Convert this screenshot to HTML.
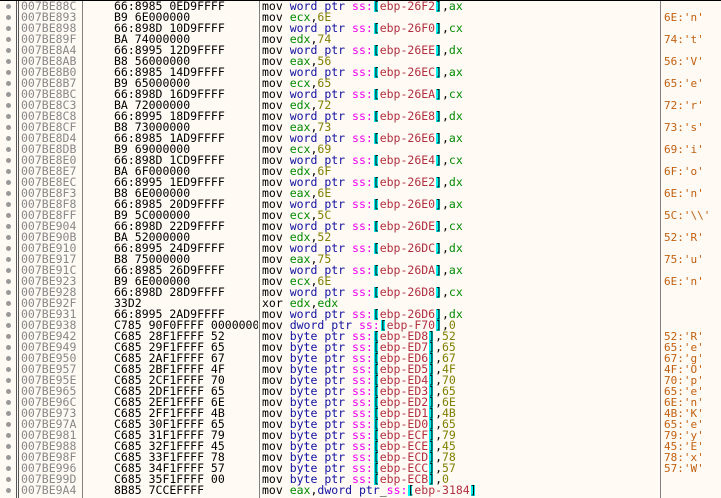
<!DOCTYPE html>
<html><head><meta charset="utf-8"><style>
html,body{margin:0;padding:0;}
body{width:721px;height:497px;background:#fffaf4;position:relative;overflow:hidden;font-family:"DejaVu Sans Mono","Liberation Mono",monospace;font-size:11.5px;}
#top{position:absolute;left:0;top:0;width:721px;height:1px;background:#000;}
.v{position:absolute;top:1px;height:497px;width:1px;background:#808080;}
.r{position:absolute;left:0;height:11px;width:721px;line-height:11px;white-space:pre;}
dt{position:absolute;left:6px;top:3px;width:5px;height:5px;border-radius:50%;background:#999;}
ad{position:absolute;left:21px;top:0;color:#888;}
by{position:absolute;left:114px;top:0;width:144px;overflow:hidden;color:#000;}
ds{position:absolute;left:262px;top:0;color:#000;}
cm{position:absolute;left:664px;top:0;color:#c06010;font-size:11px;}
sz{color:#1010a0;}
sg{color:#f000f0;}
k{display:inline-block;width:6.9px;background:linear-gradient(90deg,transparent 1px,#00f0f0 1px,#00f0f0 5px,transparent 5px);}
e{color:#b03040;}
rg{color:#008a00;}
n{color:#808000;}
</style></head><body>
<div id="top"></div>
<div class="v" style="left:16px;background:#555"></div>
<div class="v" style="left:18px;background:#555"></div>
<div class="v" style="left:82px"></div>
<div class="v" style="left:259px"></div>
<div class="v" style="left:660px"></div>

<div class="r" style="top:1px"><dt></dt><ad>007BE88C</ad><by>66:8985 0ED9FFFF</by><ds>mov <sz>word ptr</sz> <sg>ss:</sg><k>[</k><e>ebp-26F2</e><k>]</k>,<rg>ax</rg></ds></div>
<div class="r" style="top:12px"><dt></dt><ad>007BE893</ad><by>B9 6E000000</by><ds>mov <rg>ecx</rg>,<n>6E</n></ds><cm>6E:'n'</cm></div>
<div class="r" style="top:23px"><dt></dt><ad>007BE898</ad><by>66:898D 10D9FFFF</by><ds>mov <sz>word ptr</sz> <sg>ss:</sg><k>[</k><e>ebp-26F0</e><k>]</k>,<rg>cx</rg></ds></div>
<div class="r" style="top:34px"><dt></dt><ad>007BE89F</ad><by>BA 74000000</by><ds>mov <rg>edx</rg>,<n>74</n></ds><cm>74:'t'</cm></div>
<div class="r" style="top:45px"><dt></dt><ad>007BE8A4</ad><by>66:8995 12D9FFFF</by><ds>mov <sz>word ptr</sz> <sg>ss:</sg><k>[</k><e>ebp-26EE</e><k>]</k>,<rg>dx</rg></ds></div>
<div class="r" style="top:56px"><dt></dt><ad>007BE8AB</ad><by>B8 56000000</by><ds>mov <rg>eax</rg>,<n>56</n></ds><cm>56:'V'</cm></div>
<div class="r" style="top:67px"><dt></dt><ad>007BE8B0</ad><by>66:8985 14D9FFFF</by><ds>mov <sz>word ptr</sz> <sg>ss:</sg><k>[</k><e>ebp-26EC</e><k>]</k>,<rg>ax</rg></ds></div>
<div class="r" style="top:78px"><dt></dt><ad>007BE8B7</ad><by>B9 65000000</by><ds>mov <rg>ecx</rg>,<n>65</n></ds><cm>65:'e'</cm></div>
<div class="r" style="top:89px"><dt></dt><ad>007BE8BC</ad><by>66:898D 16D9FFFF</by><ds>mov <sz>word ptr</sz> <sg>ss:</sg><k>[</k><e>ebp-26EA</e><k>]</k>,<rg>cx</rg></ds></div>
<div class="r" style="top:100px"><dt></dt><ad>007BE8C3</ad><by>BA 72000000</by><ds>mov <rg>edx</rg>,<n>72</n></ds><cm>72:'r'</cm></div>
<div class="r" style="top:111px"><dt></dt><ad>007BE8C8</ad><by>66:8995 18D9FFFF</by><ds>mov <sz>word ptr</sz> <sg>ss:</sg><k>[</k><e>ebp-26E8</e><k>]</k>,<rg>dx</rg></ds></div>
<div class="r" style="top:122px"><dt></dt><ad>007BE8CF</ad><by>B8 73000000</by><ds>mov <rg>eax</rg>,<n>73</n></ds><cm>73:'s'</cm></div>
<div class="r" style="top:133px"><dt></dt><ad>007BE8D4</ad><by>66:8985 1AD9FFFF</by><ds>mov <sz>word ptr</sz> <sg>ss:</sg><k>[</k><e>ebp-26E6</e><k>]</k>,<rg>ax</rg></ds></div>
<div class="r" style="top:144px"><dt></dt><ad>007BE8DB</ad><by>B9 69000000</by><ds>mov <rg>ecx</rg>,<n>69</n></ds><cm>69:'i'</cm></div>
<div class="r" style="top:155px"><dt></dt><ad>007BE8E0</ad><by>66:898D 1CD9FFFF</by><ds>mov <sz>word ptr</sz> <sg>ss:</sg><k>[</k><e>ebp-26E4</e><k>]</k>,<rg>cx</rg></ds></div>
<div class="r" style="top:166px"><dt></dt><ad>007BE8E7</ad><by>BA 6F000000</by><ds>mov <rg>edx</rg>,<n>6F</n></ds><cm>6F:'o'</cm></div>
<div class="r" style="top:177px"><dt></dt><ad>007BE8EC</ad><by>66:8995 1ED9FFFF</by><ds>mov <sz>word ptr</sz> <sg>ss:</sg><k>[</k><e>ebp-26E2</e><k>]</k>,<rg>dx</rg></ds></div>
<div class="r" style="top:188px"><dt></dt><ad>007BE8F3</ad><by>B8 6E000000</by><ds>mov <rg>eax</rg>,<n>6E</n></ds><cm>6E:'n'</cm></div>
<div class="r" style="top:199px"><dt></dt><ad>007BE8F8</ad><by>66:8985 20D9FFFF</by><ds>mov <sz>word ptr</sz> <sg>ss:</sg><k>[</k><e>ebp-26E0</e><k>]</k>,<rg>ax</rg></ds></div>
<div class="r" style="top:210px"><dt></dt><ad>007BE8FF</ad><by>B9 5C000000</by><ds>mov <rg>ecx</rg>,<n>5C</n></ds><cm>5C:'\\'</cm></div>
<div class="r" style="top:221px"><dt></dt><ad>007BE904</ad><by>66:898D 22D9FFFF</by><ds>mov <sz>word ptr</sz> <sg>ss:</sg><k>[</k><e>ebp-26DE</e><k>]</k>,<rg>cx</rg></ds></div>
<div class="r" style="top:232px"><dt></dt><ad>007BE90B</ad><by>BA 52000000</by><ds>mov <rg>edx</rg>,<n>52</n></ds><cm>52:'R'</cm></div>
<div class="r" style="top:243px"><dt></dt><ad>007BE910</ad><by>66:8995 24D9FFFF</by><ds>mov <sz>word ptr</sz> <sg>ss:</sg><k>[</k><e>ebp-26DC</e><k>]</k>,<rg>dx</rg></ds></div>
<div class="r" style="top:254px"><dt></dt><ad>007BE917</ad><by>B8 75000000</by><ds>mov <rg>eax</rg>,<n>75</n></ds><cm>75:'u'</cm></div>
<div class="r" style="top:265px"><dt></dt><ad>007BE91C</ad><by>66:8985 26D9FFFF</by><ds>mov <sz>word ptr</sz> <sg>ss:</sg><k>[</k><e>ebp-26DA</e><k>]</k>,<rg>ax</rg></ds></div>
<div class="r" style="top:276px"><dt></dt><ad>007BE923</ad><by>B9 6E000000</by><ds>mov <rg>ecx</rg>,<n>6E</n></ds><cm>6E:'n'</cm></div>
<div class="r" style="top:287px"><dt></dt><ad>007BE928</ad><by>66:898D 28D9FFFF</by><ds>mov <sz>word ptr</sz> <sg>ss:</sg><k>[</k><e>ebp-26D8</e><k>]</k>,<rg>cx</rg></ds></div>
<div class="r" style="top:298px"><dt></dt><ad>007BE92F</ad><by>33D2</by><ds>xor <rg>edx</rg>,<rg>edx</rg></ds></div>
<div class="r" style="top:309px"><dt></dt><ad>007BE931</ad><by>66:8995 2AD9FFFF</by><ds>mov <sz>word ptr</sz> <sg>ss:</sg><k>[</k><e>ebp-26D6</e><k>]</k>,<rg>dx</rg></ds></div>
<div class="r" style="top:320px"><dt></dt><ad>007BE938</ad><by>C785 90F0FFFF 00000000</by><ds>mov <sz>dword ptr</sz> <sg>ss:</sg><k>[</k><e>ebp-F70</e><k>]</k>,<n>0</n></ds></div>
<div class="r" style="top:331px"><dt></dt><ad>007BE942</ad><by>C685 28F1FFFF 52</by><ds>mov <sz>byte ptr</sz> <sg>ss:</sg><k>[</k><e>ebp-ED8</e><k>]</k>,<n>52</n></ds><cm>52:'R'</cm></div>
<div class="r" style="top:342px"><dt></dt><ad>007BE949</ad><by>C685 29F1FFFF 65</by><ds>mov <sz>byte ptr</sz> <sg>ss:</sg><k>[</k><e>ebp-ED7</e><k>]</k>,<n>65</n></ds><cm>65:'e'</cm></div>
<div class="r" style="top:353px"><dt></dt><ad>007BE950</ad><by>C685 2AF1FFFF 67</by><ds>mov <sz>byte ptr</sz> <sg>ss:</sg><k>[</k><e>ebp-ED6</e><k>]</k>,<n>67</n></ds><cm>67:'g'</cm></div>
<div class="r" style="top:364px"><dt></dt><ad>007BE957</ad><by>C685 2BF1FFFF 4F</by><ds>mov <sz>byte ptr</sz> <sg>ss:</sg><k>[</k><e>ebp-ED5</e><k>]</k>,<n>4F</n></ds><cm>4F:'O'</cm></div>
<div class="r" style="top:375px"><dt></dt><ad>007BE95E</ad><by>C685 2CF1FFFF 70</by><ds>mov <sz>byte ptr</sz> <sg>ss:</sg><k>[</k><e>ebp-ED4</e><k>]</k>,<n>70</n></ds><cm>70:'p'</cm></div>
<div class="r" style="top:386px"><dt></dt><ad>007BE965</ad><by>C685 2DF1FFFF 65</by><ds>mov <sz>byte ptr</sz> <sg>ss:</sg><k>[</k><e>ebp-ED3</e><k>]</k>,<n>65</n></ds><cm>65:'e'</cm></div>
<div class="r" style="top:397px"><dt></dt><ad>007BE96C</ad><by>C685 2EF1FFFF 6E</by><ds>mov <sz>byte ptr</sz> <sg>ss:</sg><k>[</k><e>ebp-ED2</e><k>]</k>,<n>6E</n></ds><cm>6E:'n'</cm></div>
<div class="r" style="top:408px"><dt></dt><ad>007BE973</ad><by>C685 2FF1FFFF 4B</by><ds>mov <sz>byte ptr</sz> <sg>ss:</sg><k>[</k><e>ebp-ED1</e><k>]</k>,<n>4B</n></ds><cm>4B:'K'</cm></div>
<div class="r" style="top:419px"><dt></dt><ad>007BE97A</ad><by>C685 30F1FFFF 65</by><ds>mov <sz>byte ptr</sz> <sg>ss:</sg><k>[</k><e>ebp-ED0</e><k>]</k>,<n>65</n></ds><cm>65:'e'</cm></div>
<div class="r" style="top:430px"><dt></dt><ad>007BE981</ad><by>C685 31F1FFFF 79</by><ds>mov <sz>byte ptr</sz> <sg>ss:</sg><k>[</k><e>ebp-ECF</e><k>]</k>,<n>79</n></ds><cm>79:'y'</cm></div>
<div class="r" style="top:441px"><dt></dt><ad>007BE988</ad><by>C685 32F1FFFF 45</by><ds>mov <sz>byte ptr</sz> <sg>ss:</sg><k>[</k><e>ebp-ECE</e><k>]</k>,<n>45</n></ds><cm>45:'E'</cm></div>
<div class="r" style="top:452px"><dt></dt><ad>007BE98F</ad><by>C685 33F1FFFF 78</by><ds>mov <sz>byte ptr</sz> <sg>ss:</sg><k>[</k><e>ebp-ECD</e><k>]</k>,<n>78</n></ds><cm>78:'x'</cm></div>
<div class="r" style="top:463px"><dt></dt><ad>007BE996</ad><by>C685 34F1FFFF 57</by><ds>mov <sz>byte ptr</sz> <sg>ss:</sg><k>[</k><e>ebp-ECC</e><k>]</k>,<n>57</n></ds><cm>57:'W'</cm></div>
<div class="r" style="top:474px"><dt></dt><ad>007BE99D</ad><by>C685 35F1FFFF 00</by><ds>mov <sz>byte ptr</sz> <sg>ss:</sg><k>[</k><e>ebp-ECB</e><k>]</k>,<n>0</n></ds></div>
<div class="r" style="top:485px"><dt></dt><ad>007BE9A4</ad><by>8B85 7CCEFFFF</by><ds>mov <rg>eax</rg>,<sz>dword ptr</sz>_<sg>ss:</sg><k>[</k><e>ebp-3184</e><k>]</k></ds></div>
</body></html>
